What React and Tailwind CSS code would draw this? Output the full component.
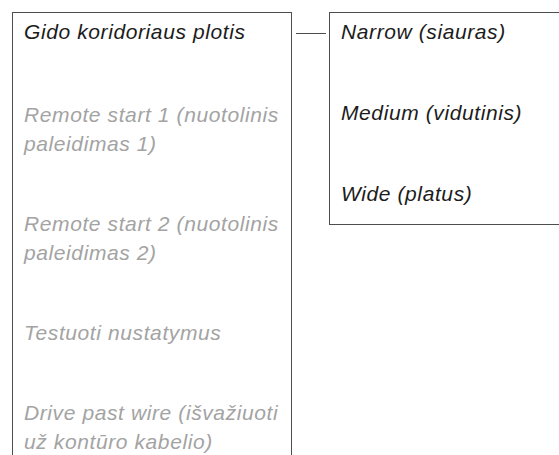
const leftItems = [
    { text: 'Remote start 1 (nuotolinis paleidimas 1)' },
    { text: 'Remote start 2 (nuotolinis paleidimas 2)' },
    { text: 'Testuoti nustatymus' },
    { text: 'Drive past wire (išvažiuoti už kontūro kabelio)' },
]

const options = ['Narrow (siauras)', 'Medium (vidutinis)', 'Wide (platus)']

export default function App() {
    return (
        <div className="h-[455px] overflow-hidden bg-white flex items-start pl-3 pt-3 [font-family:'Liberation_Sans',Arial,sans-serif] italic text-[21px] leading-[29px] tracking-[0.6px]">
            {/* menu column */}
            <div className="w-[280px] h-[443px] shrink-0 border border-b-0 border-[#4d4d4d] pl-[11px] pr-2 pt-[4px] flex flex-col gap-[51px]">
                <div className="text-[#1c1c1c] mb-[3px]">Gido koridoriaus plotis</div>
                {leftItems.map((item, i) => (
                    <div key={i} className="text-[#a3a3a3]">{item.text}</div>
                ))}
            </div>

            <div className="mt-[21px] ml-1 w-[30px] h-px shrink-0 bg-[#4d4d4d]"></div>

            {/* submenu */}
            <div className="ml-[3px] w-[240px] shrink-0 border border-r-0 border-[#4d4d4d] pl-[11px] pt-[4px] pb-[16px] flex flex-col gap-[52px]">
                {options.map((o, i) => (
                    <div key={i} className="text-[#1c1c1c]">{o}</div>
                ))}
            </div>
        </div>
    )
}
